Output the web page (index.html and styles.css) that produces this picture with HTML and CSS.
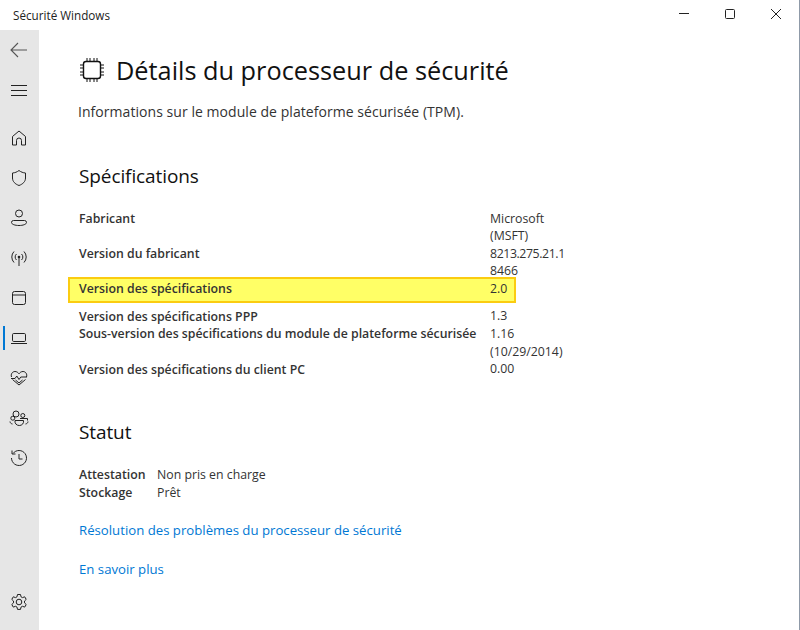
FILE: index.html
```html
<!DOCTYPE html>
<html lang="fr">
<head>
<meta charset="utf-8">
<title>Sécurité Windows</title>
<link rel="stylesheet" href="styles.css">
</head>
<body>
<div class="window">
  <header class="titlebar">
    <span class="app-title">Sécurité Windows</span>
    <div class="controls">
      <svg class="ctl" viewBox="0 0 46 30"><path d="M18 13.5h10" stroke="#222" stroke-width="1"/></svg>
      <svg class="ctl" viewBox="0 0 46 30"><rect x="18.5" y="9.5" width="9" height="9" rx="1" fill="none" stroke="#222"/></svg>
      <svg class="ctl" viewBox="0 0 46 30"><path d="M18 9l10 10M28 9l-10 10" stroke="#222" fill="none"/></svg>
    </div>
  </header>
  <div class="main">
    <nav class="sidebar">
      <svg class="back" viewBox="0 0 20 20"><path d="M18 10H2.500M9 3l-7 7 7 7" fill="none" stroke="#555" stroke-width="1.100"/></svg>
      <svg class="burger" viewBox="0 0 20 20"><path d="M2 5.500h16M2 10.500h16M2 15.500h16" fill="none" stroke="#222"/></svg>
      <div class="nav-icons">
        <svg class="ni" viewBox="0 0 20 20"><path d="M3.500 17V8.500L10 3l6.500 5.500V17H12.500v-4.500a2.500 2.500 0 0 0-5 0V17z" fill="none" stroke="#222" stroke-linejoin="round"/></svg>
        <svg class="ni" viewBox="0 0 20 20"><path d="M10 2.500c2 1.500 4 2.300 6.500 2.500V10c0 3.500-2.500 6-6.500 7.500C6 16 3.500 13.500 3.500 10V5C6 4.800 8 4 10 2.500z" fill="none" stroke="#222"/></svg>
        <svg class="ni" viewBox="0 0 20 20"><circle cx="10" cy="5.500" r="3.500" fill="none" stroke="#222"/><path d="M4.500 12.500h11a2 2 0 0 1 2 2c0 1.800-3.500 3-7.500 3s-7.500-1.200-7.500-3a2 2 0 0 1 2-2z" fill="none" stroke="#222"/></svg>
        <svg class="ni" viewBox="0 0 20 20"><circle cx="10" cy="9" r="1.300" fill="#222"/><path d="M10 10v8M7.500 12a4 4 0 0 1 0-6M12.500 6a4 4 0 0 1 0 6M5 14.500a8 8 0 0 1 0-11M15 3.500a8 8 0 0 1 0 11" fill="none" stroke="#222"/></svg>
        <svg class="ni" viewBox="0 0 20 20"><rect x="3.500" y="3.500" width="13" height="13" rx="2" fill="none" stroke="#222"/><path d="M3.500 7h13" stroke="#222"/></svg>
        <div class="ni-active"><svg class="ni" viewBox="0 0 20 20"><rect x="3.500" y="5.500" width="13" height="8" rx="1.200" fill="none" stroke="#222"/><path d="M2 15.500h16" stroke="#222"/></svg></div>
        <svg class="ni" viewBox="0 0 20 20"><path d="M2.500 9C1.500 6 3.500 3.500 6 3.500c1.800 0 3 1 4 2.300 1-1.300 2.200-2.300 4-2.300 2.500 0 4.500 2.500 3.500 5.500M3.500 11.500L10 17l6.500-5.500M6.500 12l3.500 3 3.500-3" fill="none" stroke="#222"/><path d="M2 10.500h4l1.800-2.500 2.200 3.500 1.800-2.500H18" fill="none" stroke="#222"/></svg>
        <svg class="ni" viewBox="0 0 20 20"><circle cx="7" cy="6" r="3" fill="none" stroke="#222"/><circle cx="13.800" cy="7.500" r="2" fill="none" stroke="#222"/><circle cx="3.800" cy="10.200" r="2" fill="none" stroke="#222"/><path d="M6 12.500h8.500c.5 3-1.500 5-4.200 5S5.500 15.500 6 12.500zM3.500 16c-1.500-.3-2.300-1-2.500-2.500M16.500 16c1.500-.3 2.300-1 2.500-2.500M11 10.500h7.500v2" fill="none" stroke="#222"/></svg>
        <svg class="ni" viewBox="0 0 20 20"><path d="M4 5.500a7.500 7.500 0 1 1-1.500 4.500M3 2.500V6h3.500M10 6v5h3.500" fill="none" stroke="#222"/></svg>
      </div>
      <svg class="ni settings" viewBox="0 0 20 20"><circle cx="10" cy="10" r="2.800" fill="none" stroke="#222"/><path d="M8.500 2.500h3l.5 2.300 1.500.8 2.200-.8 1.500 2.600-1.700 1.600v1.900l1.700 1.600-1.500 2.600-2.200-.8-1.500.8-.5 2.300h-3l-.5-2.300-1.500-.8-2.200.8-1.500-2.600 1.700-1.600V9l-1.700-1.600 1.500-2.600 2.200.8 1.500-.8z" fill="none" stroke="#222" stroke-linejoin="round"/></svg>
    </nav>
    <main class="content">
      <div class="page-head">
        <svg class="chip" viewBox="0 0 28 28"><rect x="5.500" y="5.500" width="17" height="17" rx="2.500" fill="none" stroke="#111" stroke-width="1.400"/><path d="M9 2v3M12 2v3M16 2v3M19 2v3M9 23v3M12 23v3M16 23v3M19 23v3M2 9h3M2 12h3M2 16h3M2 19h3M23 9h3M23 12h3M23 16h3M23 19h3" stroke="#111" fill="none"/></svg>
        <h1>Détails du processeur de sécurité</h1>
      </div>
      <p class="subtitle">Informations sur le module de plateforme sécurisée (TPM).</p>
      <h2 class="spec-title">Spécifications</h2>
      <dl class="specs">
        <div class="row"><dt>Fabricant</dt><dd>Microsoft<br>(MSFT)</dd></div>
        <div class="row"><dt>Version du fabricant</dt><dd><span class="tight">8213.275.21.1</span><br>8466</dd></div>
        <div class="row highlight"><dt>Version des spécifications</dt><dd>2.0</dd></div>
        <div class="row"><dt>Version des spécifications PPP</dt><dd>1.3</dd></div>
        <div class="row"><dt>Sous-version des spécifications du module de plateforme sécurisée</dt><dd>1.16<br>(10/29/2014)</dd></div>
        <div class="row"><dt>Version des spécifications du client PC</dt><dd>0.00</dd></div>
      </dl>
      <h2 class="status-title">Statut</h2>
      <dl class="status">
        <dt>Attestation</dt><dd>Non pris en charge</dd>
        <dt>Stockage</dt><dd>Prêt</dd>
      </dl>
      <a class="link first" href="#">Résolution des problèmes du processeur de sécurité</a>
      <a class="link second" href="#">En savoir plus</a>
    </main>
  </div>
</div>
</body>
</html>
```
FILE: styles.css
```css
* { box-sizing: border-box; }
html, body { margin: 0; height: 100%; }
body { font-family: "Open Sans", "Noto Sans", sans-serif; color: #333; background: #fff; overflow: hidden; }
.window { width: 800px; height: 630px; display: flex; flex-direction: column; border-right: 1px solid #8f9aa8; }
.titlebar { height: 30px; flex: none; display: flex; justify-content: space-between; align-items: flex-start; }
.app-title { font-size: 11.700px; line-height: 30px; margin-left: 13px; color: #222; }
.controls { display: flex; }
.ctl { width: 46px; height: 30px; display: block; }
.main { flex: 1; display: flex; min-height: 0; }
.sidebar { width: 39px; flex: none; background: #e6e6e6; display: flex; flex-direction: column; align-items: center; padding: 10px 1px 0 0; }
.back { width: 20px; height: 20px; display: block; }
.burger { width: 20px; height: 20px; display: block; margin-top: 20px; }
.nav-icons { display: flex; flex-direction: column; gap: 20px; margin-top: 28px; align-items: center; width: 100%; }
.ni { width: 20px; height: 20px; display: block; }
.ni-active { width: 100%; display: flex; justify-content: center; position: relative; }
.ni-active::before { content: ""; position: absolute; left: 3px; top: -2px; width: 2px; height: 24px; background: #0078d4; }
.settings { margin-top: auto; margin-bottom: 18px; }
.content { flex: 1; padding-left: 40px; min-width: 0; }
.page-head { display: flex; align-items: center; gap: 10px; margin-top: 24px; height: 32px; margin-left: -1px; }
.chip { width: 28px; height: 28px; display: block; flex: none; }
h1 { margin: 0; font-size: 25.300px; font-weight: 400; color: #111; line-height: 32px; }
.subtitle { margin: 16px 0 0 -1px; font-size: 14px; line-height: 20px; letter-spacing: 0.05px; color: #333; }
h2 { margin: 0; font-size: 19px; font-weight: 400; color: #111; line-height: 26px; letter-spacing: -0.1px; }
.spec-title { margin-top: 41px; }
.specs { margin: 21px 0 0; font-size: 12.300px; line-height: 17.600px; }
.row { display: flex; }
dt { font-weight: 600; }
dd { margin: 0; }
.row dd { margin: -0.5px 0 0.5px; }
.tight { letter-spacing: -0.4px; }
.row dt { width: 411px; flex: none; }
.highlight { margin: -3px 0 4.500px -11px; width: 448px; height: 26px; padding: 1px 0 0 9px; background: #ffff66; border: 2px solid #fbcc11; }
.status-title { margin-top: 41px; }
.status { margin: 21px 0 0; display: grid; grid-template-columns: 78px auto; justify-content: start; font-size: 12.300px; line-height: 18px; }
.link { display: block; color: #0078d4; text-decoration: none; font-size: 13.200px; line-height: 20px; }
.first { margin-top: 18px; }
.second { margin-top: 19px; }
```
